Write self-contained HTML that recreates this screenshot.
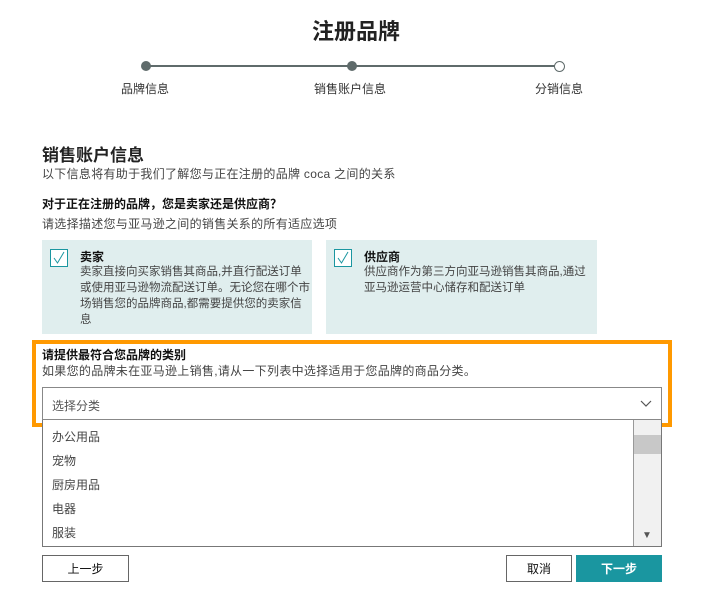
<html><head><style>
body{margin:0;width:712px;height:590px;background:#fff;font-family:"Liberation Sans","Noto Sans CJK SC",sans-serif;color:#111;position:relative;overflow:hidden}
.a{position:absolute;white-space:nowrap}
.dot{position:absolute;width:10px;height:10px;border-radius:50%;background:#5f6b6b;top:61px}
.s{font-size:12px;color:#444;letter-spacing:0.3px}
.card{position:absolute;top:240px;height:94px;background:#e0eeee}
.cb{position:absolute;left:8px;top:9px;width:16px;height:16px;border:1.5px solid #1a96a0;background:#fff}
.item{position:absolute;left:9px;font-size:12px;color:#444}
.btn{position:absolute;top:555px;height:27px;border:1px solid #666;font-size:12px;text-align:center;line-height:27px;box-sizing:border-box}
.ct{font-size:11.5px;color:#444;line-height:16px}
</style></head><body>
<div class="a" style="left:0;width:712px;text-align:center;top:14px;font-size:22px;font-weight:bold;color:#222">注册品牌</div>
<div style="position:absolute;left:146px;top:65px;width:413px;height:2px;background:#5f6b6b"></div>
<div class="dot" style="left:141px"></div>
<div class="dot" style="left:347px"></div>
<div class="dot" style="left:554px;background:#fff;border:1px solid #5f6b6b;width:9px;height:9px"></div>
<div class="a" style="left:121px;top:80px;font-size:12px;color:#333">品牌信息</div>
<div class="a" style="left:314px;top:80px;font-size:12px;color:#333">销售账户信息</div>
<div class="a" style="left:535px;top:80px;font-size:12px;color:#333">分销信息</div>
<div class="a" style="left:42px;top:141px;font-size:17px;font-weight:bold;color:#222">销售账户信息</div>
<div class="a s" style="left:42px;top:165px">以下信息将有助于我们了解您与正在注册的品牌 coca 之间的关系</div>
<div class="a" style="left:42px;top:195px;font-size:12px;font-weight:bold">对于正在注册的品牌，您是卖家还是供应商？</div>
<div class="a s" style="left:42px;top:215px">请选择描述您与亚马逊之间的销售关系的所有适应选项</div>
<div class="card" style="left:42px;width:270px"><div class="cb"><svg width="16" height="16" style="position:absolute;left:0;top:0"><path d="M3 8 L6.5 13 L13 2" fill="none" stroke="#1a96a0" stroke-width="1"/></svg></div>
<div class="a" style="left:38px;top:8px;font-size:12px;font-weight:bold">卖家</div>
<div class="a ct" style="left:38px;top:24px">卖家直接向买家销售其商品,并直行配送订单<br>或使用亚马逊物流配送订单。无论您在哪个市<br>场销售您的品牌商品,都需要提供您的卖家信<br>息</div></div>
<div class="card" style="left:326px;width:271px"><div class="cb"><svg width="16" height="16" style="position:absolute;left:0;top:0"><path d="M3 8 L6.5 13 L13 2" fill="none" stroke="#1a96a0" stroke-width="1"/></svg></div>
<div class="a" style="left:38px;top:8px;font-size:12px;font-weight:bold">供应商</div>
<div class="a ct" style="left:38px;top:24px">供应商作为第三方向亚马逊销售其商品,通过<br>亚马逊运营中心储存和配送订单</div></div>
<div style="position:absolute;left:32px;top:340px;width:632px;height:79px;border:4px solid #ff9900"></div>
<div class="a" style="left:42px;top:346px;font-size:12px;font-weight:bold">请提供最符合您品牌的类别</div>
<div class="a s" style="left:42px;top:362px">如果您的品牌未在亚马逊上销售,请从一下列表中选择适用于您品牌的商品分类。</div>
<div style="position:absolute;left:42px;top:387px;width:620px;height:33px;border:1px solid #888;box-sizing:border-box;background:#fff"><span class="a" style="left:9px;top:9px;font-size:12px;color:#555">选择分类</span><svg width="12" height="8" style="position:absolute;right:9px;top:12px"><path d="M1 1 L6 6 L11 1" fill="none" stroke="#555" stroke-width="1.2"/></svg></div>
<div style="position:absolute;left:42px;top:420px;width:620px;height:127px;border:1px solid #777;border-top:none;box-sizing:border-box;background:#fff">
<div class="item" style="top:8px">办公用品</div><div class="item" style="top:32px">宠物</div><div class="item" style="top:56px">厨房用品</div><div class="item" style="top:80px">电器</div><div class="item" style="top:104px">服装</div>
<div style="position:absolute;right:0;top:0;width:27px;height:126px;background:#f1f1f1;border-left:1px solid #999"><div style="position:absolute;top:15px;left:0;width:27px;height:19px;background:#c8c8c8"></div><div class="a" style="left:8px;top:110px;font-size:10px;color:#555">▼</div></div>
</div>
<div class="btn" style="left:42px;width:87px">上一步</div>
<div class="btn" style="left:506px;width:66px">取消</div>
<div class="btn" style="left:576px;width:86px;background:#1a96a0;border-color:#1a96a0;color:#fff;font-weight:bold">下一步</div>
</body></html>
